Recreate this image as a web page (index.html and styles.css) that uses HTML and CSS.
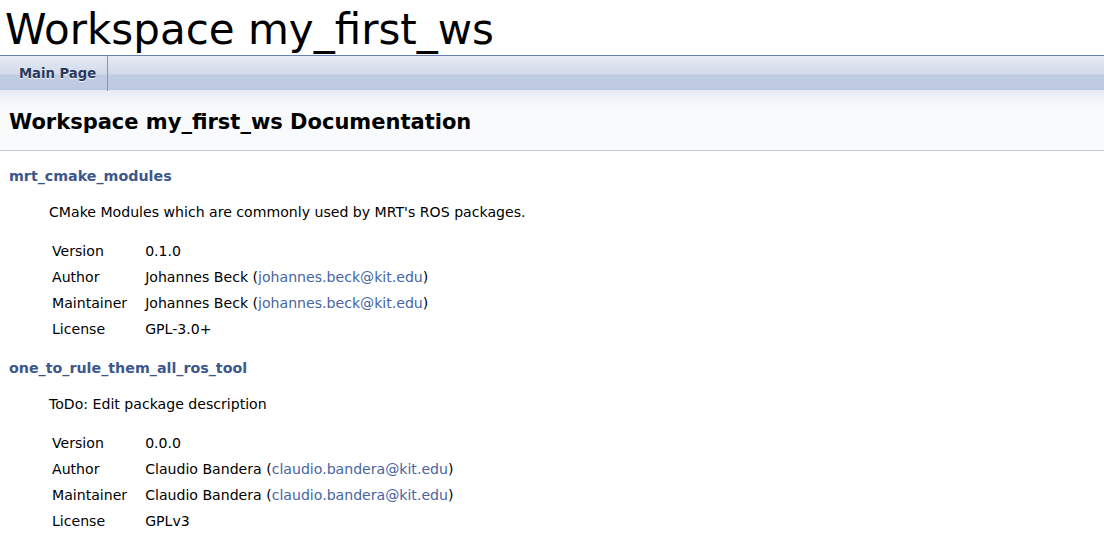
FILE: index.html
```html
<!DOCTYPE html>
<html>
<head>
<meta charset="utf-8">
<title>Workspace my_first_ws</title>
<link rel="stylesheet" href="styles.css">
</head>
<body>
<h1 class="project">Workspace my_first_ws</h1>
<div class="navbar">
  <ul class="tablist">
    <li class="tab"><a href="#">Main Page</a></li>
  </ul>
</div>
<div class="header">
  <div class="headertitle">
    <div class="title">Workspace my_first_ws Documentation</div>
  </div>
</div>
<div class="contents">
  <section class="pkg">
    <h2 class="pkgname"><a href="#">mrt_cmake_modules</a></h2>
    <p class="desc">CMake Modules which are commonly used by MRT's ROS packages.</p>
    <table class="meta">
      <tr><td class="key">Version</td><td>0.1.0</td></tr>
      <tr><td class="key">Author</td><td>Johannes Beck (<a href="#">johannes.beck@kit.edu</a>)</td></tr>
      <tr><td class="key">Maintainer</td><td>Johannes Beck (<a href="#">johannes.beck@kit.edu</a>)</td></tr>
      <tr><td class="key">License</td><td>GPL-3.0+</td></tr>
    </table>
  </section>
  <section class="pkg">
    <h2 class="pkgname"><a href="#">one_to_rule_them_all_ros_tool</a></h2>
    <p class="desc">ToDo: Edit package description</p>
    <table class="meta">
      <tr><td class="key">Version</td><td>0.0.0</td></tr>
      <tr><td class="key">Author</td><td>Claudio Bandera (<a href="#">claudio.bandera@kit.edu</a>)</td></tr>
      <tr><td class="key">Maintainer</td><td>Claudio Bandera (<a href="#">claudio.bandera@kit.edu</a>)</td></tr>
      <tr><td class="key">License</td><td>GPLv3</td></tr>
    </table>
  </section>
</div>
</body>
</html>
```
FILE: styles.css
```css
html, body {
  margin: 0;
  padding: 0;
  background: #ffffff;
  color: #000000;
  font-family: "DejaVu Sans", Verdana, sans-serif;
  font-size: 14.1px;
}

.project {
  margin: 0;
  padding: 5px 0 1px 5px;
  font-size: 42px;
  font-weight: normal;
  line-height: 49px;
  color: #000;
}

.navbar {
  border-top: 1px solid #6a7fb8;
  height: 35px;
  background: linear-gradient(to bottom, #e7ebf4 0px, #dfe5f0 6px, #d2dbeb 18px, #bfcbe3 19px, #bfcbe3 31px, #b6c3de 33px, #c9d3e8 34px, #ffffff 35px);
}

.tablist {
  list-style: none;
  margin: 0;
  padding: 0;
  display: flex;
  height: 35px;
}

.tab {
  border-right: 1px solid #8195c4;
  height: 35px;
}

.tab a {
  display: block;
  padding: 0 11px 0 19px;
  line-height: 36px;
  font-size: 13.2px;
  font-weight: bold;
  color: #283a5d;
  text-decoration: none;
  text-shadow: 0 1px 1px rgba(255,255,255,0.9);
}

.header {
  background: linear-gradient(to bottom, #e6eaf3 0px, #f3f5f9 10px, #f9fafc 18px, #f9fafc 100%);
  border-bottom: 1px solid #c4cfe5;
}

.headertitle {
  padding: 5px 5px 5px 9px;
}

.title {
  margin: 12px 0 8px;
  font-size: 21px;
  line-height: 29px;
  font-weight: bold;
}

.contents {
  padding: 0 8px 0 9px;
}

.pkg {
  padding-top: 14px;
}

.pkg + .pkg {
  padding-top: 15px;
}

.pkgname {
  margin: 0;
  font-size: 14.25px;
  line-height: 22px;
  font-weight: bold;
}

.pkgname a {
  color: #3d578c;
  text-decoration: none;
}

.desc {
  margin: 14px 0 0 40px;
  line-height: 22px;
}

.meta {
  margin: 15px 0 0 40px;
  border-collapse: collapse;
}

.meta td {
  padding: 2px 3px;
  line-height: 22px;
  vertical-align: top;
}

.meta td.key {
  padding-right: 15px;
}

.meta a {
  color: #4665a2;
  text-decoration: none;
}
```
